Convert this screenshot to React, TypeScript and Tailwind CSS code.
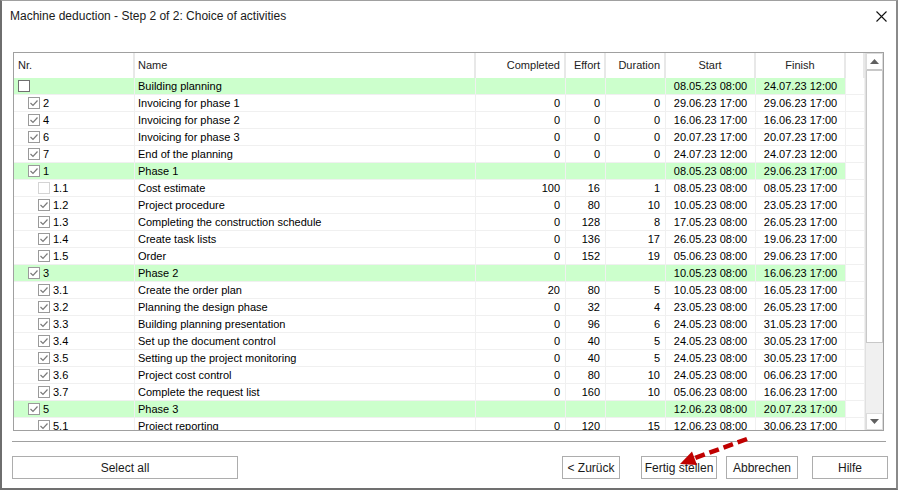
import React from 'react';

type Row = {
    nr: string;
    level: 0 | 1 | 2;
    name: string;
    checked: boolean;
    faint?: boolean;
    green?: boolean;
    completed?: string;
    effort?: string;
    duration?: string;
    start: string;
    finish: string;
};

const rows: Row[] = [
    { nr: '', level: 0, name: 'Building planning', checked: false, green: true, start: '08.05.23 08:00', finish: '24.07.23 12:00' },
    { nr: '2', level: 1, name: 'Invoicing for phase 1', checked: true, completed: '0', effort: '0', duration: '0', start: '29.06.23 17:00', finish: '29.06.23 17:00' },
    { nr: '4', level: 1, name: 'Invoicing for phase 2', checked: true, completed: '0', effort: '0', duration: '0', start: '16.06.23 17:00', finish: '16.06.23 17:00' },
    { nr: '6', level: 1, name: 'Invoicing for phase 3', checked: true, completed: '0', effort: '0', duration: '0', start: '20.07.23 17:00', finish: '20.07.23 17:00' },
    { nr: '7', level: 1, name: 'End of the planning', checked: true, completed: '0', effort: '0', duration: '0', start: '24.07.23 12:00', finish: '24.07.23 12:00' },
    { nr: '1', level: 1, name: 'Phase 1', checked: true, green: true, start: '08.05.23 08:00', finish: '29.06.23 17:00' },
    { nr: '1.1', level: 2, name: 'Cost estimate', checked: false, faint: true, completed: '100', effort: '16', duration: '1', start: '08.05.23 08:00', finish: '08.05.23 17:00' },
    { nr: '1.2', level: 2, name: 'Project procedure', checked: true, completed: '0', effort: '80', duration: '10', start: '10.05.23 08:00', finish: '23.05.23 17:00' },
    { nr: '1.3', level: 2, name: 'Completing the construction schedule', checked: true, completed: '0', effort: '128', duration: '8', start: '17.05.23 08:00', finish: '26.05.23 17:00' },
    { nr: '1.4', level: 2, name: 'Create task lists', checked: true, completed: '0', effort: '136', duration: '17', start: '26.05.23 08:00', finish: '19.06.23 17:00' },
    { nr: '1.5', level: 2, name: 'Order', checked: true, completed: '0', effort: '152', duration: '19', start: '05.06.23 08:00', finish: '29.06.23 17:00' },
    { nr: '3', level: 1, name: 'Phase 2', checked: true, green: true, start: '10.05.23 08:00', finish: '16.06.23 17:00' },
    { nr: '3.1', level: 2, name: 'Create the order plan', checked: true, completed: '20', effort: '80', duration: '5', start: '10.05.23 08:00', finish: '16.05.23 17:00' },
    { nr: '3.2', level: 2, name: 'Planning the design phase', checked: true, completed: '0', effort: '32', duration: '4', start: '23.05.23 08:00', finish: '26.05.23 17:00' },
    { nr: '3.3', level: 2, name: 'Building planning presentation', checked: true, completed: '0', effort: '96', duration: '6', start: '24.05.23 08:00', finish: '31.05.23 17:00' },
    { nr: '3.4', level: 2, name: 'Set up the document control', checked: true, completed: '0', effort: '40', duration: '5', start: '24.05.23 08:00', finish: '30.05.23 17:00' },
    { nr: '3.5', level: 2, name: 'Setting up the project monitoring', checked: true, completed: '0', effort: '40', duration: '5', start: '24.05.23 08:00', finish: '30.05.23 17:00' },
    { nr: '3.6', level: 2, name: 'Project cost control', checked: true, completed: '0', effort: '80', duration: '10', start: '24.05.23 08:00', finish: '06.06.23 17:00' },
    { nr: '3.7', level: 2, name: 'Complete the request list', checked: true, completed: '0', effort: '160', duration: '10', start: '05.06.23 08:00', finish: '16.06.23 17:00' },
    { nr: '5', level: 1, name: 'Phase 3', checked: true, green: true, start: '12.06.23 08:00', finish: '20.07.23 17:00' },
    { nr: '5.1', level: 2, name: 'Project reporting', checked: true, completed: '0', effort: '120', duration: '15', start: '12.06.23 08:00', finish: '30.06.23 17:00' },
];

const indent = ['pl-[4px]', 'pl-[14px]', 'pl-[24px]'];

const CheckBox = ({ checked, faint, strong }: { checked: boolean; faint?: boolean; strong?: boolean }) => (
    <span
        className={`w-[12px] h-[12px] shrink-0 border bg-white flex items-center justify-center ${
            faint ? 'border-[#d4d4d4]' : strong ? 'border-[#707070]' : 'border-[#9a9a9a]'
        }`}
    >
        {checked && (
            <svg width="10" height="10" viewBox="0 0 10 10">
                <path d="M1.5 5 L4 7.5 L8.5 2.5" fill="none" stroke="#7a7a7a" strokeWidth="1.2" />
            </svg>
        )}
    </span>
);

const Triangle = ({ down }: { down?: boolean }) => (
    <svg width="9" height="5" viewBox="0 0 9 5">
        <path d={down ? 'M0 0 L9 0 L4.5 5 Z' : 'M0 5 L9 5 L4.5 0 Z'} fill="#606060" />
    </svg>
);

const cell = 'h-full border-r border-[#f0f0f0] flex items-center';

const TableRow = ({ row }: { row: Row }) => {
    const bg = row.green ? 'bg-[#ccffcc]' : '';
    return (
        <div className="flex h-[17px] shrink-0 border-b border-[#f0f0f0]">
            <div className={`${cell} ${bg} w-[121px] ${indent[row.level]} gap-[3px]`}>
                <CheckBox checked={row.checked} faint={row.faint} strong={row.level === 0} />
                <span>{row.nr}</span>
            </div>
            <div className={`${cell} ${bg} w-[341px] pl-[3px]`}>{row.name}</div>
            <div className={`${cell} ${bg} w-[90px] justify-end pr-[5px]`}>{row.completed}</div>
            <div className={`${cell} ${bg} w-[40px] justify-end pr-[5px]`}>{row.effort}</div>
            <div className={`${cell} ${bg} w-[60px] justify-end pr-[5px]`}>{row.duration}</div>
            <div className={`${cell} ${bg} w-[90px] justify-center`}>{row.start}</div>
            <div className={`${cell} ${bg} w-[90px] justify-center`}>{row.finish}</div>
            <div className={`${cell} w-[19px]`} />
        </div>
    );
};

const head = 'h-full border-r-2 border-[#e8e8e8] flex items-center';

const Button = ({ label, className }: { label: string; className: string }) => (
    <button className={`h-[23px] border border-[#adadad] bg-white text-[12px] text-[#1a1a1a] flex items-center justify-center ${className}`}>
        {label}
    </button>
);

export default function App() {
    return (
        <div
            className="relative w-[898px] h-[490px] bg-white border-t border-t-[#a0a0a0] border-l-2 border-l-[#6e6e6e] border-r-2 border-r-[#8a8a8a] border-b-2 border-b-[#707070] text-black"
            style={{ fontFamily: '"Liberation Sans", Arial, sans-serif' }}
        >
            <div className="h-[30px] flex items-center justify-between pl-[8px] pr-[8px]">
                <span className="text-[12px] text-[#1a1a1a]">Machine deduction - Step 2 of 2: Choice of activities</span>
                <svg width="11" height="11" viewBox="0 0 11 11" className="mr-[1px]">
                    <path d="M0.5 0.5 L10.5 10.5 M10.5 0.5 L0.5 10.5" stroke="#111" strokeWidth="1.1" />
                </svg>
            </div>

            <div className="ml-[11px] mt-[21px] w-[871px] h-[379px] border border-[#a0a0a0] flex text-[11px]">
                <div className="w-[851px] flex flex-col overflow-hidden">
                    <div className="flex h-[25px] shrink-0 text-[#222]">
                        <div className={`${head} w-[121px] pl-[4px]`}>Nr.</div>
                        <div className={`${head} w-[341px] pl-[3px]`}>Name</div>
                        <div className={`${head} w-[90px] justify-end pr-[4px]`}>Completed</div>
                        <div className={`${head} w-[40px] justify-end pr-[4px]`}>Effort</div>
                        <div className={`${head} w-[60px] justify-end pr-[4px]`}>Duration</div>
                        <div className={`${head} w-[90px] justify-center`}>Start</div>
                        <div className={`${head} w-[90px] justify-center`}>Finish</div>
                        <div className={`${head} w-[19px]`} />
                    </div>
                    {rows.map((r, i) => (
                        <TableRow key={i} row={r} />
                    ))}
                </div>
                <div className="w-[18px] bg-[#f0f0f0] flex flex-col border-l border-[#e0e0e0]">
                    <div className="h-[18px] bg-white border border-[#dcdcdc] border-b-[#c8c8c8] border-b-2 flex items-center justify-center">
                        <Triangle />
                    </div>
                    <div className="h-[272px] bg-white border-x border-b border-[#c8c8c8]" />
                    <div className="flex-1" />
                    <div className="h-[17px] bg-white border border-[#dcdcdc] flex items-center justify-center">
                        <Triangle down />
                    </div>
                </div>
            </div>

            <div className="ml-[10px] mt-[10px] w-[874px] h-px bg-[#a0a0a0]" />

            <div className="ml-[10px] mt-[14px] w-[876px] flex items-center">
                <Button label="Select all" className="w-[226px]" />
                <div className="flex-1" />
                <Button label="< Zurück" className="w-[58px]" />
                <Button label="Fertig stellen" className="w-[76px] ml-[21px]" />
                <Button label="Abbrechen" className="w-[72px] ml-[9px]" />
                <Button label="Hilfe" className="w-[76px] ml-[14px]" />
            </div>

            <svg className="absolute left-0 top-0 pointer-events-none" width="898" height="490" viewBox="0 0 898 490">
                <path d="M745 438 L693 457" stroke="#c00000" strokeWidth="4.5" strokeDasharray="10 5" fill="none" />
                <path d="M678 463 L690 450.5 L695 464 Z" fill="#c00000" />
            </svg>
        </div>
    );
}
